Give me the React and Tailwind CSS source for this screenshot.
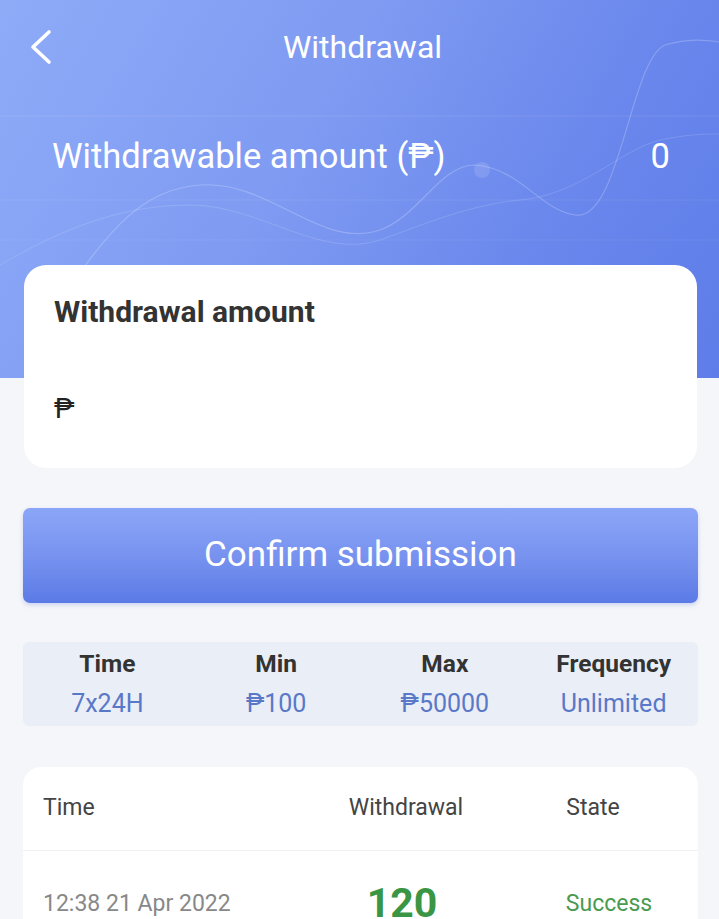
import React from "react";

const Peso = "\u20B1";

const limits = [
  { label: "Time", value: "7x24H" },
  { label: "Min", value: `${Peso}100` },
  { label: "Max", value: `${Peso}50000` },
  { label: "Frequency", value: "Unlimited" },
];

const HeaderWaves = () => (
  <svg
    className="absolute inset-0 w-full h-full pointer-events-none"
    viewBox="0 0 719 378"
    preserveAspectRatio="none"
    fill="none"
  >
    <line x1="0" y1="116" x2="719" y2="116" stroke="white" strokeOpacity="0.1" />
    <line x1="0" y1="200" x2="719" y2="200" stroke="white" strokeOpacity="0.08" />
    <line x1="0" y1="240" x2="719" y2="240" stroke="white" strokeOpacity="0.06" />
    <path
      d="M60 300 C 110 230, 140 190, 200 185 C 270 180, 320 250, 380 230 C 420 215, 440 165, 475 165 C 520 168, 540 210, 575 215 C 620 222, 630 60, 665 45 C 690 38, 705 40, 719 42"
      stroke="white"
      strokeOpacity="0.22"
      strokeWidth="1.2"
    />
    <path
      d="M0 265 C 60 230, 120 205, 190 205 C 260 205, 320 260, 380 240 C 430 222, 470 205, 520 200 C 580 195, 620 150, 660 140 C 690 134, 705 134, 719 134"
      stroke="white"
      strokeOpacity="0.14"
      strokeWidth="1"
    />
    <circle cx="482" cy="170" r="8" fill="white" fillOpacity="0.12" />
  </svg>
);

const App = () => {
  return (
    <div className="w-[719px] min-h-[919px] bg-[#f5f6f9] font-['Roboto','Liberation_Sans',sans-serif] overflow-hidden">
      {/* Header */}
      <div className="relative h-[378px] bg-[linear-gradient(120deg,#8eabf8_0%,#7f9bf2_40%,#6886ec_75%,#5e7de8_100%)]">
        <HeaderWaves />
        <div className="relative h-[94px] flex items-center justify-center">
          <svg
            className="absolute left-[26px] top-[28px]"
            width="30"
            height="38"
            viewBox="0 0 30 38"
            fill="none"
          >
            <polyline
              points="23,4 7,19 23,34"
              stroke="white"
              strokeWidth="3.6"
              strokeLinecap="round"
              strokeLinejoin="round"
            />
          </svg>
          <h1 className="text-[32px] text-white leading-none pl-[6px]">Withdrawal</h1>
        </div>
        <div className="relative h-[126px] flex items-center justify-between pl-[52px] pr-[49px] text-white text-[34.5px]">
          <span>Withdrawable amount ({Peso})</span>
          <span>0</span>
        </div>
      </div>

      {/* Amount card */}
      <div className="relative -mt-[113px] ml-[24px] mr-[22px] h-[203px] bg-white rounded-[22px] px-[30px] pt-[28px]">
        <div className="text-[30px] font-bold text-[#333] leading-[38px]">Withdrawal amount</div>
        <div className="mt-[64px] text-[28px] text-[#222] leading-none">{Peso}</div>
      </div>

      {/* Confirm */}
      <div className="pl-[23px] pr-[21px] mt-[40px]">
        <button className="w-full h-[95px] rounded-[7px] bg-[linear-gradient(180deg,#8ba6f7_0%,#7893ef_50%,#5b7ae6_100%)] text-white text-[35px] shadow-[0_2px_4px_rgba(80,110,220,0.25)]">
          Confirm submission
        </button>
      </div>

      {/* Limits */}
      <div className="ml-[23px] mr-[21px] mt-[39px] h-[84px] rounded-[6px] bg-[#eaeef6] grid grid-cols-4 items-center">
        {limits.map((l) => (
          <div key={l.label} className="flex flex-col items-center leading-none">
            <span className="text-[24.5px] font-bold text-[#333]">{l.label}</span>
            <span className="mt-[14px] text-[25px] text-[#5a78c8]">{l.value}</span>
          </div>
        ))}
      </div>

      {/* Records */}
      <div className="ml-[23px] mr-[21px] mt-[41px] bg-white rounded-[18px]">
        <div className="h-[84px] grid grid-cols-[1fr_212px_170px] items-center px-[20px] text-[23px] text-[#444] border-b border-[#f0f1f4]">
          <span>Time</span>
          <span className="text-center pl-[8px]">Withdrawal</span>
          <span className="text-center">State</span>
        </div>
        <div className="h-[106px] grid grid-cols-[1fr_212px_170px] items-center px-[20px]">
          <span className="text-[23px] text-[#888]">12:38 21 Apr 2022</span>
          <span className="text-center text-[41px] font-bold text-[#3a9645]">120</span>
          <span className="text-center text-[23px] text-[#4a9a4f] pl-[32px]">Success</span>
        </div>
      </div>
    </div>
  );
};

export default App;
